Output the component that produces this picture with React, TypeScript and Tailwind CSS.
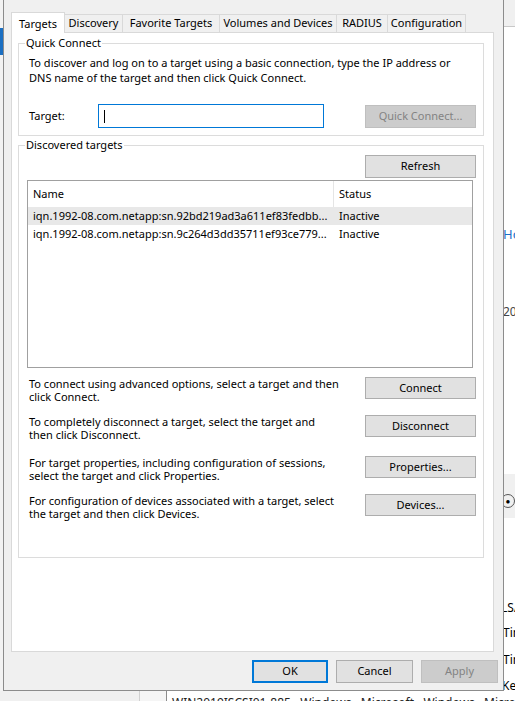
import React from "react";

const font = "font-['Segoe_UI','Noto_Sans',sans-serif]";

function Btn({
  label,
  disabled,
  primary,
  className = "",
}: {
  label: string;
  disabled?: boolean;
  primary?: boolean;
  className?: string;
}) {
  if (disabled) {
    return (
      <div className={`flex items-center justify-center border border-[#bfbfbf] bg-[#cccccc] text-[#838383] ${className}`}>
        {label}
      </div>
    );
  }
  if (primary) {
    return (
      <div className={`flex items-center justify-center border-2 border-[#0078d7] bg-[#e1e1e1] ${className}`}>
        {label}
      </div>
    );
  }
  return (
    <div className={`flex items-center justify-center border border-[#adadad] bg-[#e1e1e1] ${className}`}>
      {label}
    </div>
  );
}

function Group({
  title,
  className = "",
  children,
}: {
  title: string;
  className?: string;
  children: React.ReactNode;
}) {
  return (
    <div className={`relative border border-[#dcdcdc] ${className}`}>
      <span className="absolute -top-[9px] left-[6px] bg-white px-[1px] leading-[16px]">{title}</span>
      {children}
    </div>
  );
}

const tabs = [
  { name: "Discovery", w: "w-[59px]" },
  { name: "Favorite Targets", w: "w-[97px]" },
  { name: "Volumes and Devices", w: "w-[117px]" },
  { name: "RADIUS", w: "w-[51px]" },
  { name: "Configuration", w: "w-[78px]" },
];

const targets = [
  { iqn: "iqn.1992-08.com.netapp:sn.92bd219ad3a611ef83fedbb...", status: "Inactive", sel: true },
  { iqn: "iqn.1992-08.com.netapp:sn.9c264d3dd35711ef93ce779...", status: "Inactive", sel: false },
];

const actions = [
  { lines: ["To connect using advanced options, select a target and then", "click Connect."], btn: "Connect", mt: "mt-[9px]" },
  { lines: ["To completely disconnect a target, select the target and", "then click Disconnect."], btn: "Disconnect", mt: "mt-[11px]" },
  { lines: ["For target properties, including configuration of sessions,", "select the target and click Properties."], btn: "Properties...", mt: "mt-[14px]" },
  { lines: ["For configuration of devices associated with a target, select", "the target and then click Devices."], btn: "Devices...", mt: "mt-[11px]" },
];

function TargetsPage() {
  return (
    <div className="ml-[7px] -mt-[1px] h-[620px] w-[483px] border border-[#d9d9d9] bg-white px-[6px] pt-[10px]">
      <Group title="Quick Connect" className="h-[93px] w-[466px] pl-[10px] pr-[7px] pt-[11px]">
        <div className="leading-[15px] whitespace-nowrap">
          <div>To discover and log on to a target using a basic connection, type the IP address or</div>
          <div>DNS name of the target and then click Quick Connect.</div>
        </div>
        <div className="mt-[19px] flex items-center">
          <span className="w-[69px]">Target:</span>
          <div className="flex h-[24px] w-[226px] items-center border border-[#0078d7] bg-white">
            <span className="ml-[5px] h-[13px] w-[1px] bg-black" />
          </div>
          <Btn label="Quick Connect..." disabled className="ml-auto h-[23px] w-[111px]" />
        </div>
      </Group>

      <Group title="Discovered targets" className="mt-[9px] h-[413px] w-[466px] pl-[8px] pr-[7px] pt-[9px]">
        <div className="flex justify-end">
          <Btn label="Refresh" className="h-[23px] w-[111px]" />
        </div>
        <div className="mt-[2px] h-[188px] w-[446px] border border-[#a0a0a0] bg-white">
          <div className="flex h-[26px] items-center">
            <span className="w-[305px] pl-[5px]">Name</span>
            <span className="h-full w-[1px] bg-[#e5e5e5]" />
            <span className="pl-[5px]">Status</span>
          </div>
          {targets.map((t) => (
            <div key={t.iqn} className={`flex h-[18px] items-center whitespace-nowrap ${t.sel ? "bg-[#e8e8e8]" : ""}`}>
              <span className="w-[306px] overflow-hidden pl-[5px]">{t.iqn}</span>
              <span className="pl-[5px]">{t.status}</span>
            </div>
          ))}
        </div>
        {actions.map((a) => (
          <div key={a.btn} className={`flex h-[27px] items-start justify-between pl-[2px] ${a.mt}`}>
            <div className="leading-[13px] whitespace-nowrap">
              {a.lines.map((l) => (
                <div key={l}>{l}</div>
              ))}
            </div>
            <Btn label={a.btn} className="h-[22px] w-[111px] shrink-0" />
          </div>
        ))}
      </Group>
    </div>
  );
}

function Dialog() {
  return (
    <div className="flex h-[691px] w-[501px] shrink-0 flex-col border-x border-b border-[#8c8c8c] bg-[#f0f0f0]">
      <div className="relative z-10 ml-[7px] mt-[12px] flex h-[21px] items-end whitespace-nowrap">
        <div className="flex h-[21px] w-[54px] items-start justify-center border-x border-t border-[#d9d9d9] bg-white pt-[3px]">
          Targets
        </div>
        {tabs.map((t, i) => (
          <div
            key={t.name}
            className={`mb-[1px] flex h-[18px] items-center justify-center border-t border-r border-[#d9d9d9] bg-[#f0f0f0] ${t.w} ${i === 0 ? "-ml-[1px] border-l" : ""}`}
          >
            {t.name}
          </div>
        ))}
      </div>
      <TargetsPage />
      <div className="mt-[8px] flex justify-end gap-[8px] pr-[5px]">
        <Btn label="OK" primary className="h-[23px] w-[76px]" />
        <Btn label="Cancel" className="h-[23px] w-[77px]" />
        <Btn label="Apply" disabled className="h-[23px] w-[77px]" />
      </div>
    </div>
  );
}

export default function App() {
  return (
    <div className={`${font} flex h-[701px] w-[515px] flex-col overflow-hidden bg-white text-[11px] text-black`}>
      <div className="flex h-[691px] shrink-0">
        {/* window behind, left edge */}
        <div className="flex w-[3px] shrink-0 flex-col bg-[#f3f3f3]">
          <div className="mt-[28px] h-[27px] bg-[#1b6fc2]" />
        </div>
        <Dialog />
        {/* window behind, right edge */}
        <div className="flex w-[11px] flex-col overflow-hidden whitespace-nowrap">
          <div className="h-[27px] shrink-0 border-b border-[#c8c8c8] bg-[#f0f0f0]" />
          <div className="mt-[199px] -ml-[1px] text-[13px] leading-[16px] text-[#1a6fc9]">Ho</div>
          <div className="mt-[62px] -ml-[1px] text-[12px] leading-[16px] text-[#444]">2019</div>
          <div className="mt-[154px] h-[44px] shrink-0 bg-[#f0f0f0] pt-[20px] pl-[1px]">
            <span className="-ml-[4px] flex h-[14px] w-[14px] items-center justify-center rounded-full border border-[#555] text-[8px]">
              ●
            </span>
          </div>
          <div className="mt-[82px] -ml-[3px] text-[12px] leading-[16px]">LSA</div>
          <div className="mt-[9px] -ml-[1px] text-[12px] leading-[16px]">Tim</div>
          <div className="mt-[11px] -ml-[1px] text-[12px] leading-[16px]">Tim</div>
          <div className="mt-[10px] -ml-[2px] text-[12px] leading-[16px]">Ker</div>
        </div>
      </div>
      {/* window behind, bottom edge */}
      <div className="flex flex-1 overflow-hidden">
        <div className="w-[140px] shrink-0 border-r border-[#d0d0d0] bg-[#f0f0f0]" />
        <div className="w-[27px] shrink-0 border-r border-[#8c8c8c] bg-[#f5f5f5]" />
        <div className="pl-[5px] pt-[4px] text-[12px] leading-[16px] whitespace-nowrap text-[#222]">
          WIN2019ISCSI01-885&nbsp;&nbsp;&nbsp;Windows&nbsp;&nbsp;&nbsp;Microsoft&nbsp;&nbsp;&nbsp;Windows&nbsp;&nbsp;&nbsp;Microsoft
        </div>
      </div>
    </div>
  );
}
